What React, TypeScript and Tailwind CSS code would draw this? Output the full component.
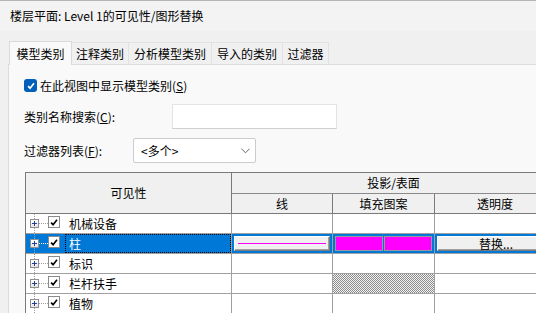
import React from 'react';

const tabs = [
  { label: '模型类别', w: 'w-[63px]', active: true },
  { label: '注释类别', w: 'w-[58px]' },
  { label: '分析模型类别', w: 'w-[84px]' },
  { label: '导入的类别', w: 'w-[72px]' },
  { label: '过滤器', w: 'w-[47px]' },
];

const rows = [
  { name: '机械设备' },
  { name: '柱', selected: true },
  { name: '标识' },
  { name: '栏杆扶手', hatch: true },
  { name: '植物' },
];

function Tick({ className }: { className?: string }) {
  return (
    <svg viewBox="0 0 12 12" className={className}>
      <path d="M2.5 6.2 L4.9 8.6 L9.6 2.8" fill="none" stroke="currentColor" strokeWidth="2" />
    </svg>
  );
}

function TreeCell({ name, selected }: { name: string; selected?: boolean }) {
  return (
    <div className={`relative h-full flex items-center ${selected ? 'bg-[#0078d7] text-white' : 'bg-white text-black'}`}>
      {/* dotted tree line */}
      <div className="absolute left-[8px] top-0 bottom-0 border-l border-dotted border-[#a0a0a0]" />
      <div className="relative ml-[4px] w-[9px] h-[9px] border border-[#8f8f8f] bg-gradient-to-b from-white to-[#e6e6e6] flex items-center justify-center">
        <div className="absolute w-[5px] h-px bg-[#24418e]" />
        <div className="absolute h-[5px] w-px bg-[#24418e]" />
      </div>
      <div className={`w-[9px] border-t border-dotted ${selected ? 'border-white' : 'border-[#a0a0a0]'}`} />
      <div className="w-[12px] h-[12px] border border-[#8a8a8a] bg-white flex items-center justify-center -mt-[3px]">
        <Tick className="w-[11px] h-[11px] text-black" />
      </div>
      {selected ? (
        <div className="ml-[5px] self-stretch flex-1 flex items-center pl-[3px] border border-dotted border-black">
          {name}
        </div>
      ) : (
        <div className="ml-[9px]">{name}</div>
      )}
    </div>
  );
}

function Button3D({ children, className }: { children?: React.ReactNode; className?: string }) {
  return (
    <div
      className={`flex-1 bg-[#f0f0f0] border border-t-white border-l-white border-r-[#7a7a7a] border-b-[#7a7a7a] shadow-[inset_-1px_-1px_0_#a0a0a0] flex items-center justify-center ${className ?? ''}`}
    >
      {children}
    </div>
  );
}

export default function App() {
  return (
    <div className="w-[536px] h-[313px] overflow-hidden bg-[#f0f0f0] text-[12px] text-black font-['Noto_Sans_CJK_SC','Noto_Sans',sans-serif] flex flex-col">
      {/* title bar */}
      <div className="h-[31px] shrink-0 bg-[#f3f3f3] border-t border-[#b4b4b4] flex items-center pl-[10px] text-[12px] leading-none">
        楼层平面: Level 1的可见性/图形替换
      </div>

      {/* tabs */}
      <div className="h-[33px] shrink-0 flex items-end pl-[9px]">
        {tabs.map((t) => (
          <div
            key={t.label}
            className={`${t.w} shrink-0 flex items-center justify-center border border-b-0 ${
              t.active
                ? 'h-[24px] bg-[#f9f9f9] border-[#d9d9d9] relative z-10 -mb-px'
                : 'h-[22px] bg-[#f0f0f0] border-[#e2e2e2] -ml-px first:ml-0'
            }`}
          >
            {t.label}
          </div>
        ))}
      </div>

      {/* panel */}
      <div className="flex-1 ml-[8px] bg-[#f9f9f9] border-l border-t border-[#dcdcdc] pl-[15px] pt-[14px] overflow-hidden">
        <div className="flex items-center h-[13px]">
          <div className="w-[13px] h-[13px] rounded-[3px] bg-[#005fb8] flex items-center justify-center">
            <Tick className="w-[10px] h-[10px] text-white" />
          </div>
          <span className="ml-[3px]">在此视图中显示模型类别(<span className="underline">S</span>)</span>
        </div>

        <div className="flex items-center mt-[12px] h-[25px]">
          <span className="w-[148px] shrink-0">类别名称搜索(<span className="underline">C</span>):</span>
          <div className="w-[165px] h-[25px] bg-white border border-[#e3e3e3] border-b-[#cfcfcf]" />
        </div>

        <div className="flex items-center mt-[9px] h-[25px]">
          <span className="w-[109px] shrink-0">过滤器列表(<span className="underline">F</span>):</span>
          <div className="w-[123px] h-[25px] bg-white border border-[#cccccc] rounded-[2px] flex items-center pl-[7px] pr-[5px] justify-between">
            <span>&lt;多个&gt;</span>
            <svg viewBox="0 0 10 6" className="w-[9px] h-[6px]">
              <path d="M0.5 0.5 L5 5 L9.5 0.5" fill="none" stroke="#555" strokeWidth="1" />
            </svg>
          </div>
        </div>

        {/* table */}
        <div className="mt-[9px] ml-px w-[530px] grid grid-cols-[206px_101px_102px_120px] grid-rows-[21px_20px_20px_20px_20px_20px_20px] border-t border-l border-[#7a7a7a]">
          <div className="row-span-2 bg-[#f0f0f0] border-r border-b border-[#7a7a7a] flex items-center justify-center">
            可见性
          </div>
          <div className="col-span-3 bg-[#f0f0f0] border-b border-[#8a8a8a] flex items-center justify-center">
            投影/表面
          </div>
          <div className="bg-[#f0f0f0] border-r border-b border-[#7a7a7a] flex items-center justify-center">线</div>
          <div className="bg-[#f0f0f0] border-r border-b border-[#7a7a7a] flex items-center justify-center">填充图案</div>
          <div className="bg-[#f0f0f0] border-b border-[#7a7a7a] flex items-center justify-center">透明度</div>

          {rows.map((r) => (
            <React.Fragment key={r.name}>
              <div className="border-r border-b border-[#a0a0a0]">
                <TreeCell name={r.name} selected={r.selected} />
              </div>
              {r.selected ? (
                <>
                  <div className="border-r border-b border-[#a0a0a0] bg-[#0078d7] p-[2px] flex">
                    <Button3D className="px-[3px]">
                      <div className="w-full h-px bg-[#ff00ff]" />
                    </Button3D>
                  </div>
                  <div className="border-r border-b border-[#a0a0a0] bg-[#0078d7] p-[2px] flex gap-px">
                    <div className="flex-1 bg-[#ff00ff] border border-[#9a9a9a]" />
                    <div className="flex-1 bg-[#ff00ff] border border-[#9a9a9a]" />
                  </div>
                  <div className="border-b border-[#a0a0a0] bg-[#0078d7] py-[2px] pl-[2px] flex">
                    <Button3D>替换...</Button3D>
                  </div>
                </>
              ) : (
                <>
                  <div className="border-r border-b border-[#a0a0a0] bg-white" />
                  <div
                    className={`border-r border-b border-[#a0a0a0] ${
                      r.hatch
                        ? 'bg-[repeating-conic-gradient(#8c8c8c_0_25%,#f2f2f2_0_50%)] bg-[length:2px_2px]'
                        : 'bg-white'
                    }`}
                  />
                  <div className="border-b border-[#a0a0a0] bg-white" />
                </>
              )}
            </React.Fragment>
          ))}
        </div>
      </div>
    </div>
  );
}
